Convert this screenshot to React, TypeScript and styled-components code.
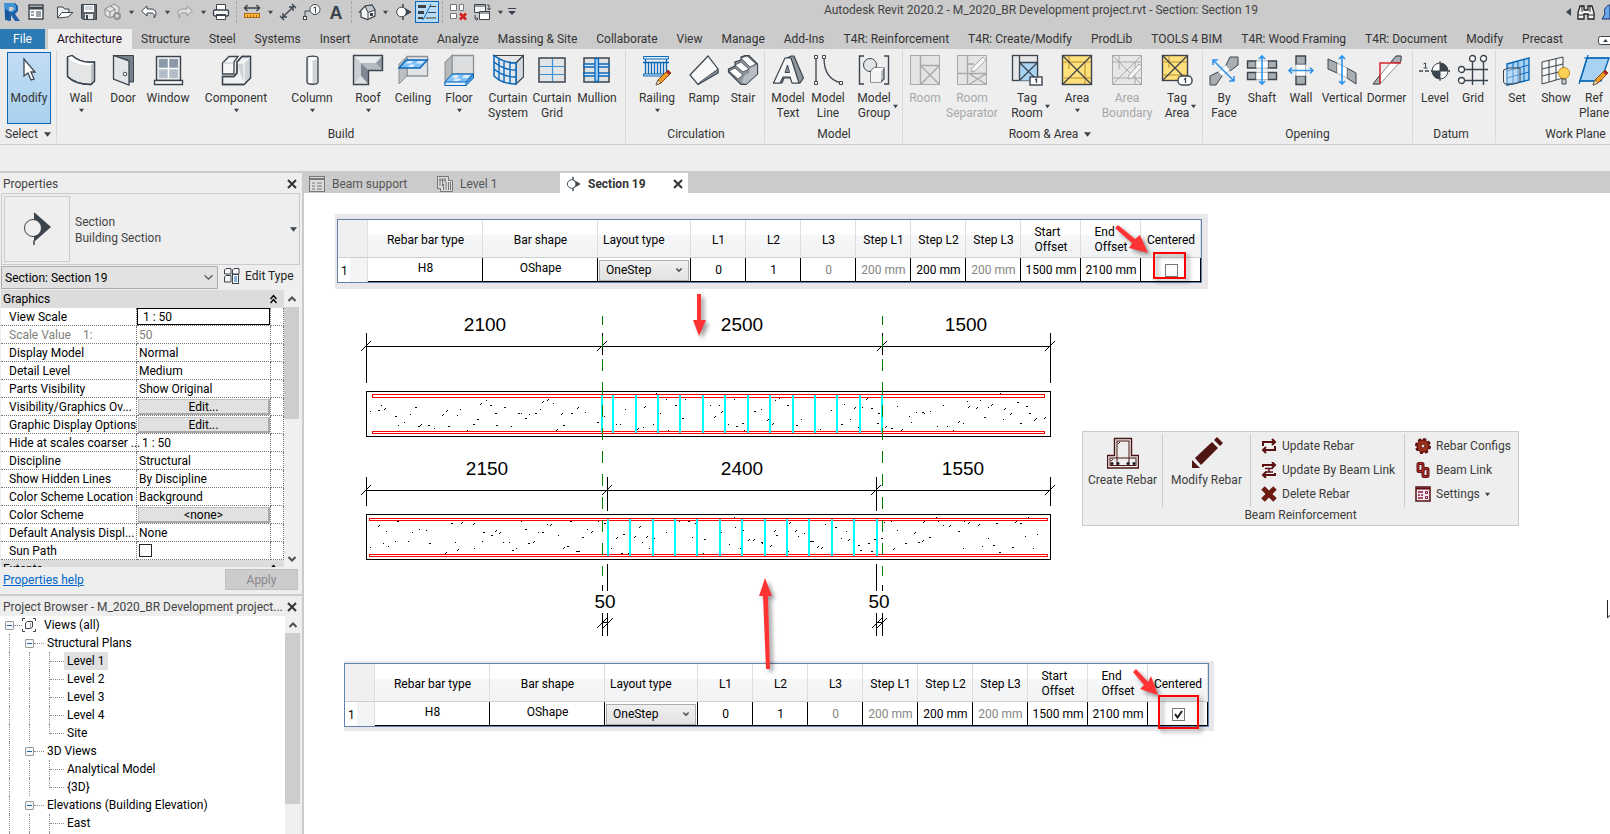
import React from "react";
import styled, { createGlobalStyle, css } from "styled-components";

const GlobalStyle = createGlobalStyle`
  *, *::before, *::after { box-sizing: border-box; }
  html, body, #root { height: 100%; }
  body {
    margin: 0;
    overflow: hidden;
    background: #eeeeee;
    color: #333333;
    font: 12px/16px Roboto, "Liberation Sans", sans-serif;
  }
  button, select, input { font: inherit; color: inherit; }
  svg { display: block; flex: none; }
`;

const ButtonBase = styled.button`
  margin: 0;
  padding: 0;
  border: 0;
  background: none;
`;

const Shell = styled.div`
  display: flex;
  flex-direction: column;
  height: 100vh;
`;

/* ---------- title bar ---------- */

const TitleBar = styled.header`
  display: flex;
  align-items: flex-start;
  height: 29px;
  background: #cbcbcb;
`;

const QuickBar = styled.div`
  display: flex;
  align-items: center;
  height: 24px;
`;

const QuickButton = styled(ButtonBase)<{ $active?: boolean; $spaced?: boolean }>`
  display: flex;
  align-items: center;
  justify-content: center;
  width: 24px;
  height: 22px;
  margin-left: ${(p) => (p.$spaced ? 5 : 0)}px;
  ${(p) => p.$active && css`background: #b9dbf6; border: 1px solid #0a67b8;`}
`;

const QuickDrop = styled(ButtonBase)`
  display: flex;
  align-items: center;
  justify-content: center;
  width: 12px;
  height: 22px;
`;

const QuickSplit = styled.span`
  width: 1px;
  height: 22px;
  margin: 0 3px;
  border-left: 1px dashed #a6a6a6;
`;

const WindowTitle = styled.h1`
  flex: 1;
  margin: 0;
  font-size: 12px;
  font-weight: 400;
  line-height: 20px;
  text-align: center;
  white-space: nowrap;
  color: #444444;
`;

const SearchBar = styled.div`
  display: flex;
  align-items: center;
  justify-content: flex-end;
  width: 46px;
  height: 24px;
  gap: 6px;
  overflow: hidden;
`;

/* ---------- ribbon ---------- */

const TabStrip = styled.nav`
  display: flex;
  height: 20px;
  overflow: hidden;
  background: #cbcbcb;
`;

const FileTab = styled(ButtonBase)`
  flex: none;
  width: 45px;
  margin-right: 3px;
  background: #2c7ab4;
  color: #ffffff;
`;

const RibbonTab = styled(ButtonBase)<{ $active?: boolean }>`
  flex: none;
  padding: 0 10px 0 9px;
  white-space: nowrap;
  background: ${(p) => (p.$active ? "#eeeeee" : "transparent")};
  color: ${(p) => (p.$active ? "#1c0a1c" : "#333333")};
`;

const RibbonToggle = styled(ButtonBase)`
  flex: none;
  margin-left: auto;
  padding-top: 3px;
  width: 12px;
  overflow: hidden;
`;

const Ribbon = styled.section`
  display: flex;
  flex: none;
  height: 96px;
  overflow: hidden;
  background: #eeeeee;
  border-bottom: 1px solid #cbcbcb;
`;

const Panel = styled.section<{ $pad?: number; $padEnd?: number; $min?: number }>`
  display: flex;
  flex: none;
  flex-direction: column;
  min-width: ${(p) => p.$min ?? 0}px;
  margin: 1px 0;
  padding: 0 ${(p) => p.$padEnd ?? 0}px 0 ${(p) => p.$pad ?? 0}px;
  border-right: 1px solid #d9d9d9;
`;

const PanelTools = styled.div`
  display: flex;
  height: 76px;
`;

const PanelTitle = styled.h2`
  display: flex;
  align-items: center;
  justify-content: center;
  gap: 6px;
  margin: 0;
  font-size: 12px;
  font-weight: 400;
  line-height: 16px;
`;

const ToolButton = styled(ButtonBase)<{ $w: number }>`
  display: flex;
  flex: none;
  flex-direction: column;
  align-items: center;
  width: ${(p) => p.$w}px;
  padding-top: 4px;
  color: #333333;
  &:disabled { color: #a8a8a8; }
  &:disabled svg { opacity: 0.4; filter: grayscale(1); }
`;

const ToolLabel = styled.span`
  display: flex;
  align-items: center;
  margin-top: 5px;
  line-height: 15px;
  white-space: pre;
`;

const LabelPad = styled.span`
  flex: none;
  width: 8px;
  padding-left: 2px;
`;

const ToolDrop = styled.span`
  display: flex;
  height: 8px;
  align-items: center;
`;

const ModifyButton = styled(ButtonBase)`
  display: flex;
  flex-direction: column;
  align-items: center;
  width: 44px;
  height: 72px;
  margin: 2px 5px 2px 7px;
  padding-top: 1px;
  border: 1px solid #0a67b8;
  background: linear-gradient(#c2dcf4, #a9d2ee);
`;

const OptionsBar = styled.div`
  flex: none;
  height: 26px;
`;

/* ---------- work area ---------- */

const Workspace = styled.main`
  display: flex;
  flex: 1;
  min-height: 0;
  border-top: 2px solid #cbcbcb;
`;

const SideBar = styled.aside`
  display: flex;
  flex: none;
  flex-direction: column;
  width: 304px;
  border-right: 2px solid #cbcbcb;
`;

const PaletteHead = styled.header`
  display: flex;
  flex: none;
  align-items: center;
  justify-content: space-between;
  height: 20px;
  padding: 2px 5px 0 3px;
  white-space: nowrap;
  color: #444444;
`;

const PaletteTitle = styled.h2`
  margin: 0;
  font-size: 12px;
  font-weight: 400;
`;

const TypeBox = styled.div`
  display: flex;
  flex: none;
  align-items: center;
  height: 72px;
  margin: 0 2px 0 1px;
  padding: 0 2px;
  border: 1px solid #cbcbcb;
  color: #444444;
`;

const TypeThumb = styled.div`
  display: flex;
  align-items: center;
  justify-content: center;
  width: 66px;
  height: 66px;
  border: 1px solid #cbcbcb;
`;

const TypeNames = styled.p`
  flex: 1;
  margin: 0;
  padding: 2px 0 0 5px;
`;

const InstanceRow = styled.div`
  display: flex;
  flex: none;
  align-items: center;
  height: 25px;
  padding: 0 2px 0 1px;
  gap: 6px;
`;

const SelectWrap = styled.label<{ $w: number; $h: number }>`
  display: grid;
  grid-template-columns: 1fr 18px;
  align-items: center;
  justify-items: center;
  width: ${(p) => p.$w}px;
  height: ${(p) => p.$h}px;
  border: 1px solid #adadad;
  background: #e1e1e1;
  color: #000000;
  select {
    grid-area: 1 / 1 / 2 / 3;
    width: 100%;
    height: 100%;
    padding: 0 3px;
    border: 0;
    background: none;
    appearance: none;
  }
  svg { grid-area: 1 / 2; pointer-events: none; }
`;

const EditType = styled(ButtonBase)`
  display: flex;
  align-items: center;
  gap: 5px;
  padding-bottom: 3px;
  color: #222222;
`;

const PropScroll = styled.div`
  display: flex;
  flex: none;
  height: 277px;
  padding: 0 2px 0 1px;
  overflow: hidden;
`;

const PropTable = styled.table`
  flex: none;
  width: 283px;
  height: min-content;
  table-layout: fixed;
  border-collapse: separate;
  border-spacing: 0;
  background: #ffffff;
  color: #000000;
`;

const GroupCell = styled.th`
  height: 18px;
  padding: 0 7px 0 2px;
  background: #dcdcdc;
  font-weight: 400;
  text-align: left;
  div { display: flex; align-items: center; justify-content: space-between; }
`;

const PropName = styled.th<{ $dim?: boolean }>`
  height: 18px;
  padding: 0 0 0 8px;
  border: 1px dotted #777777;
  border-width: 0 1px 1px 0;
  font-weight: 400;
  line-height: 16px;
  text-align: left;
  white-space: pre;
  color: ${(p) => (p.$dim ? "#80807a" : "#000000")};
`;

const PropValue = styled.td<{ $dim?: boolean; $flush?: boolean }>`
  padding: 0 0 0 ${(p) => (p.$flush ? 0 : 2)}px;
  border: 1px dotted #777777;
  border-width: 0 1px 1px 0;
  line-height: 16px;
  white-space: pre;
  color: ${(p) => (p.$dim ? "#80807a" : "#000000")};
`;

const ScaleInput = styled.input`
  display: block;
  width: 133px;
  height: 17px;
  padding: 0 5px;
  border: 1px solid #000000;
`;

const CellButton = styled(ButtonBase)`
  display: block;
  width: 132px;
  height: 16px;
  margin-left: 1px;
  border: 1px solid #c2c2c2;
  border-right: 2px solid #a8a8a8;
  border-bottom: 2px solid #a8a8a8;
  background: #e1e1e1;
  line-height: 14px;
`;

const Tick = styled.input<{ $edge?: string }>`
  display: block;
  width: 13px;
  height: 13px;
  margin: 0;
  border: 1px solid ${(p) => p.$edge ?? "#222222"};
  background: #ffffff;
  appearance: none;
`;

const TickBox = styled.label`
  display: inline-grid;
  place-items: center;
  vertical-align: middle;
  & > * { grid-area: 1 / 1; }
  svg { pointer-events: none; }
`;

const ScrollBar = styled.div`
  display: flex;
  flex: none;
  flex-direction: column;
  align-items: center;
  width: 15px;
  background: #f0f0f0;
`;

const ScrollArrow = styled(ButtonBase)`
  display: flex;
  align-items: center;
  justify-content: center;
  flex: none;
  width: 15px;
  height: 17px;
`;

const ScrollThumb = styled.div<{ $h: number }>`
  flex: none;
  width: 15px;
  height: ${(p) => p.$h}px;
  margin-bottom: auto;
  background: #cdcdcd;
`;

const PaletteFoot = styled.footer`
  display: flex;
  flex: none;
  align-items: center;
  justify-content: space-between;
  height: 27px;
  padding: 0 4px 2px 3px;
  a { color: #0066cc; }
`;

const ApplyButton = styled(ButtonBase)`
  width: 73px;
  height: 21px;
  border: 1px solid #bfbfbf;
  background: #cccccc;
  &:disabled { color: #8a868a; }
`;

const BrowserPalette = styled.section`
  display: flex;
  flex: 1;
  flex-direction: column;
  min-height: 0;
  border-top: 2px solid #cbcbcb;
`;

const BrowserBody = styled.div`
  display: flex;
  flex: 1;
  min-height: 0;
  margin-right: 2px;
  overflow: hidden;
  background: #ffffff;
`;

const Tree = styled.ul`
  flex: 1;
  margin: 0;
  padding: 0;
  list-style: none;
  color: #000000;
`;

const TreeRow = styled.li`
  display: flex;
  align-items: center;
  height: 18px;
  white-space: nowrap;
`;

const Guide = styled.span<{ $kind: "pass" | "leaf" | "end" }>`
  flex: none;
  align-self: ${(p) => (p.$kind === "end" ? "flex-start" : "stretch")};
  height: ${(p) => (p.$kind === "end" ? "10px" : "auto")};
  width: ${(p) => (p.$kind === "pass" ? 11 : 0)}px;
  margin-left: 9px;
  border-left: 1px dotted #8c8c8c;
`;

const Twig = styled.span<{ $w: number }>`
  flex: none;
  width: ${(p) => p.$w}px;
  height: 1px;
  border-top: 1px dotted #8c8c8c;
`;

const Fold = styled(ButtonBase)`
  display: grid;
  place-items: center;
  flex: none;
  width: 9px;
  height: 9px;
  margin-left: 5px;
  border: 1px solid #9a9a9a;
  border-radius: 1px;
  background: #f4f7fa;
  &::before { content: ""; width: 5px; height: 1px; background: #2563a8; }
`;

const TreeText = styled.span<{ $on?: boolean; $root?: boolean }>`
  padding: 1px 3px 1px ${(p) => (p.$root ? 8 : 3)}px;
  background: ${(p) => (p.$on ? "#e0e0e0" : "transparent")};
`;

/* ---------- documents ---------- */

const DocArea = styled.section`
  display: flex;
  flex: 1;
  flex-direction: column;
  min-width: 0;
  background: #ffffff;
`;

const DocTabs = styled.nav`
  display: flex;
  flex: none;
  height: 20px;
  background: #cbcbcb;
`;

const DocTab = styled.div<{ $active?: boolean }>`
  display: flex;
  align-items: center;
  width: 128px;
  padding: 2px 5px 0;
  gap: 7px;
  background: ${(p) => (p.$active ? "#ffffff" : "transparent")};
  color: ${(p) => (p.$active ? "#333333" : "#555555")};
  font-weight: ${(p) => (p.$active ? 700 : 400)};
`;

const DocName = styled(ButtonBase)`
  flex: 1;
  text-align: left;
  white-space: nowrap;
`;

const Canvas = styled.div`
  position: relative;
  flex: 1;
  min-height: 0;
  overflow: hidden;
`;

const GridFrame = styled.section<{ $first?: boolean }>`
  width: max-content;
  margin: ${(p) => (p.$first ? "21px 0 0 31px" : "0 0 0 40px")};
  padding: ${(p) => (p.$first ? "5px 6px 6px 2px" : "2px 5px 4px 0")};
  background: #e9e7e9;
`;

const RebarTable = styled.table`
  width: 865px;
  height: 64px;
  table-layout: fixed;
  border-collapse: separate;
  border-spacing: 0;
  border: 1px solid #5f83ad;
  background: #ffffff;
  color: #000000;
`;

const HeadCell = styled.th<{ $left?: boolean; $corner?: boolean }>`
  height: 38px;
  padding: 3px 0 0 ${(p) => (p.$left ? 5 : 1)}px;
  border-right: 1px solid #dedede;
  border-bottom: 1px solid #cfcfcf;
  background: ${(p) => (p.$corner ? "#f0f0f0" : "linear-gradient(#ffffff 40%, #f6f7f8 41%, #f1f2f4)")};
  font-weight: 400;
  line-height: 15px;
  text-align: ${(p) => (p.$left ? "left" : "center")};
  white-space: nowrap;
  span { display: inline-block; text-align: left; white-space: pre; }
`;

const RowHead = styled.th`
  padding: 2px 0 0 3px;
  background: linear-gradient(90deg, #ffffff 40%, #f3f4f6 41%);
  border-right: 1px solid #dedede;
  font-weight: 400;
  text-align: left;
`;

const DataCell = styled.td<{ $dim?: boolean; $high?: boolean }>`
  height: 24px;
  padding: ${(p) => (p.$high ? "0 0 3px 1px" : "1px 0 0 1px")};
  border-right: 1px solid #000000;
  border-bottom: 1px solid #000000;
  text-align: center;
  white-space: nowrap;
  line-height: 15px;
  color: ${(p) => (p.$dim ? "#85857f" : "#000000")};
`;

const LayoutSelect = styled(SelectWrap)`
  background: linear-gradient(#f0f0f0, #e2e2e2);
  select { padding: 1px 0 0 6px; }
`;

const DrawingRow = styled.div`
  display: flex;
  align-items: flex-start;
  padding-left: 40px;
  gap: 14px;
`;

const Markup = styled.svg`
  position: absolute;
  inset: 0;
  pointer-events: none;
`;

const MarkupShadow = styled.g`
  filter: drop-shadow(3px 3px 2px rgba(0, 0, 0, 0.4));
`;

const ReinforcePanel = styled.section`
  flex: none;
  width: 437px;
  height: 95px;
  margin-top: 142px;
  border: 1px solid #cbcbcb;
  background: #eeeeee;
  color: #3c3c3c;
`;

const ReinforceTools = styled.div`
  display: flex;
  height: 73px;
  margin-top: 2px;
`;

const BigTool = styled(ButtonBase)<{ $w: number }>`
  display: flex;
  flex-direction: column;
  align-items: center;
  gap: 3px;
  width: ${(p) => p.$w}px;
  padding-top: 3px;
  border-right: 1px solid #cbcbcb;
  white-space: nowrap;
`;

const SmallTools = styled.div<{ $w?: number }>`
  display: flex;
  flex-direction: column;
  width: ${(p) => (p.$w ? `${p.$w}px` : "auto")};
  padding-left: 10px;
  border-right: ${(p) => (p.$w ? "1px solid #cbcbcb" : "0")};
`;

const SmallTool = styled(ButtonBase)`
  display: flex;
  align-items: center;
  gap: 5px;
  height: 24px;
  white-space: nowrap;
`;

/* ---------- icons ---------- */

const INK = "#3b444d";
const BLUE = "#0a67b8";

const Caret = ({ size = 5 }: { size?: number }) => (
  <svg width={size} height={size} viewBox="0 0 6 6"><path d="M0 1H6L3 5Z" fill={INK} /></svg>
);

const Cross = () => (
  <svg width="10" height="10" viewBox="0 0 10 10"><path d="M1 1L9 9M9 1L1 9" stroke="#333333" strokeWidth="2" /></svg>
);

const Chevron = ({ up, size = 8 }: { up?: boolean; size?: number }) => (
  <svg width={size} height={size} viewBox="0 0 8 8" fill="none" stroke="#505050" strokeWidth={size > 8 ? 1 : 2}>
    <path d={up ? "M0.5 6L4 2.5L7.5 6" : "M0.5 2L4 5.5L7.5 2"} />
  </svg>
);

const quick: Record<string, React.ReactNode> = {
  logo: (
    <>
      <path d="M2 0H12L15 3V8L12 11L17 18H12L8 12V18L2 17Z" fill="#1d5fa8" />
      <path d="M1 0H11L13 3V7L10 9H6V17L2 15Z" fill="#3f92d6" />
      <path d="M6 4H10L11 6L9 8H6Z" fill="#cbcbcb" />
      <path d="M2 6L6 8V18L2 15Z" fill="#1a5799" />
    </>
  ),
  list: (
    <>
      <rect x="2" y="2" width="14" height="14" fill="#fff" stroke={INK} strokeWidth="1.4" />
      <path d="M2 5H16" stroke={INK} strokeWidth="3" />
      <path d="M4 9H7M4 12H7M9 9H14M9 11H14M9 13H14" stroke={INK} />
    </>
  ),
  open: (
    <>
      <path d="M1.500 15V4H7L8.500 6H13V9" fill="#eee" stroke={INK} />
      <path d="M1.500 15L6 9.500H17L12 14Z" fill="#fff" stroke={INK} />
    </>
  ),
  save: (
    <>
      <path d="M1.500 1.500H16.500V16.500H3L1.500 15Z" fill="#5d656d" stroke={INK} />
      <rect x="4" y="2" width="10" height="7" fill="#fff" />
      <rect x="5" y="11" width="8" height="5" fill="#e8e8e8" />
      <rect x="6" y="12" width="2" height="4" fill={INK} />
      <path d="M5 4H13M5 6H13" stroke="#a8b0b8" />
    </>
  ),
  sync: (
    <g fill="#e2e2e2" stroke="#8a8a8a">
      <path d="M5 4L10 1L15 4V9L10 12L5 9Z" />
      <path d="M1 6L6 3L11 6V12L6 15L1 12Z" />
      <path d="M1 6L6 9L11 6M6 9V15" fill="none" />
      <circle cx="13" cy="13" r="3.500" fill="#9a9a9a" />
      <path d="M11 13H15M13 11V15" stroke="#eee" />
    </g>
  ),
  undo: <path d="M7 3L1.500 8L7 13V10H11C14 10 15 12 14 15C17 12 17 6 11 6H7Z" fill="#fff" stroke={INK} />,
  redo: <path d="M11 3L16.500 8L11 13V10H7C4 10 3 12 4 15C1 12 1 6 7 6H11Z" fill="#ddd" stroke="#9b9b9b" />,
  print: (
    <>
      <path d="M4.500 7V1.500H13.500V7" fill="#fff" stroke={INK} />
      <rect x="1.500" y="7" width="15" height="6" rx="1.500" fill="#f4f4f4" stroke={INK} strokeWidth="1.400" />
      <path d="M4.500 12H13.500V16.500H4.500Z" fill="#fff" stroke={INK} />
      <path d="M4 12H14" stroke={INK} strokeWidth="2" />
    </>
  ),
  measure: (
    <>
      <path d="M2 5H16M4.500 2L1.500 5L4.500 8M13.500 2L16.500 5L13.500 8" stroke={INK} strokeWidth="1.500" fill="none" />
      <rect x="1.500" y="10.500" width="15" height="4" fill="#ffb83f" stroke="#b06a12" />
      <path d="M4.500 12V14M7.500 12V14M10.500 12V14M13.500 12V14" stroke="#b06a12" />
    </>
  ),
  dim: <path d="M3 15L15 3M4 10V14H8M10 4H14V8M1 13L5 17M13 1L17 5" stroke={INK} strokeWidth="1.300" fill="none" />,
  tag: (
    <>
      <circle cx="12" cy="6.500" r="5" fill="#fff" stroke={INK} />
      <path d="M10.500 5L12.500 4V10M7 8H2V14" stroke={INK} fill="none" />
      <rect x="0.500" y="13.500" width="3" height="3" fill="#fff" stroke={INK} />
    </>
  ),
  house: (
    <>
      <path d="M1.500 9L7 3L14 2L17 7V13L9.500 16.500L3 14V9Z" fill="#f4f4f4" stroke={INK} strokeWidth="1.200" />
      <path d="M7 3L14 2L17 7L10 9.500Z" fill="#c3c8cd" stroke={INK} />
      <path d="M10 9.500V16" stroke={INK} />
      <rect x="12" y="10" width="3" height="3" fill={INK} />
    </>
  ),
  section: (
    <>
      <path d="M9 1V17V13.500L17 9L9 4.500Z" fill={INK} stroke={INK} />
      <circle cx="7.500" cy="9" r="4.800" fill="#fff" stroke={INK} />
    </>
  ),
  thin: (
    <>
      <path d="M0 3.500H8M0 9.500H6" stroke={INK} strokeWidth="3" />
      <path d="M0 15H5" stroke={INK} strokeWidth="2" />
      <path d="M12 3.500H18M10 9.500H18M8 15H18" stroke={INK} />
      <path d="M13 1L5 17" stroke={BLUE} />
    </>
  ),
  closeViews: (
    <>
      <g fill="#fff" stroke="#777"><path d="M1.500 1.500H7.500V7.500H1.500ZM10.500 1.500H14.500V7.500H10.500ZM1.500 10.500H7.500V15.500H1.500Z" /></g>
      <path d="M11 10.500L17 16.500M17 10.500L11 16.500" stroke="#d81e1e" strokeWidth="2.500" />
    </>
  ),
  switchViews: (
    <>
      <path d="M1.500 1.500H12.500V9.500H1.500ZM1 3H13" fill="#f4f4f4" stroke={INK} />
      <path d="M6.500 8.500H16.500V16.500H6.500ZM6 10H17" fill="#fff" stroke={INK} />
      <path d="M14 2H16V6M14.500 5L16 7L17.500 5M2 12V16H5M3.500 14.500L5 16L3.500 17.500" fill="none" stroke={INK} />
    </>
  ),
  binoculars: (
    <>
      <path d="M3 3H7V7H11V3H15L17 10V16H11V11H7V16H1V10Z" fill="#f4f4f4" stroke="#222" strokeWidth="1.300" />
      <path d="M1 12H7M11 12H17M5 3V9M13 3V9" stroke="#222" />
    </>
  ),
};

const QuickIcon = ({ name, size = 18 }: { name: string; size?: number }) => (
  <svg width={size} height={size} viewBox="0 0 18 18" fill="none">
    {name === "letter" ? (
      <text x="9" y="16" fontFamily="Liberation Sans, sans-serif" fontWeight="700" fontSize="18" textAnchor="middle" fill={INK}>A</text>
    ) : quick[name]}
  </svg>
);

const Pencil = () => (
  <g>
    <path d="M15 31L17 26L27 16L30 19L20 29Z" fill="#f29b27" stroke="#8a4a10" />
    <path d="M27 16L30 19L28 21L25 18Z" fill="#a4282b" />
    <path d="M15 31L17 26L20 29Z" fill="#f9dfae" stroke={INK} strokeWidth="0.600" />
  </g>
);

const tool: Record<string, React.ReactNode> = {
  wall: (
    <>
      <path d="M2.500 3L7 1.500C13 7 20 9 29.500 8V27L26 30.500C16 30.500 8 28 2.500 22.500Z" fill="#e3e5e7" stroke={INK} strokeWidth="1.300" />
      <path d="M2.500 3L7 1.500C13 7 20 9 29.500 8L26 11C17 12 8 9 2.500 3Z" fill="#fff" />
      <path d="M26 11V30L29.500 27V8Z" fill="#bcc1c6" />
      <path d="M2.500 3L7 1.500C13 7 20 9 29.500 8V27L26 30.500C16 30.500 8 28 2.500 22.500Z" fill="none" stroke={INK} strokeWidth="1.300" />
    </>
  ),
  door: (
    <>
      <path d="M6.500 1.500H26.500V28H21V6Z" fill="#77808a" stroke={INK} />
      <path d="M6.500 1.500L22 7V31L6.500 25Z" fill="#e2e5e7" stroke={INK} strokeWidth="1.300" />
      <circle cx="18" cy="20" r="1.800" fill="#fff" stroke={INK} />
    </>
  ),
  window: (
    <>
      <rect x="4.500" y="2.500" width="24" height="24" fill="#e8eaec" stroke={INK} strokeWidth="1.400" />
      <rect x="7" y="5" width="19" height="19" fill="#8b99a8" />
      <rect x="7" y="15" width="19" height="9" fill="#b4bec8" />
      <path d="M16.500 5V24M7 14.500H26" stroke="#fff" strokeWidth="1.500" />
      <path d="M2.500 26.500H30.500V30.500H2.500Z" fill="#fff" stroke={INK} strokeWidth="1.400" />
    </>
  ),
  component: (
    <>
      <path d="M2.500 9L9 2.500H18L14 8V20H2.500Z" fill="#f6f6f6" stroke={INK} strokeWidth="1.300" />
      <path d="M2.500 22.500H14L17 19V8L22 2.500H30.500V24L24 30.500H2.500Z" fill="#f0f1f2" stroke={INK} strokeWidth="1.300" />
      <path d="M17 9H23.500L30 3V24L24 30Z" fill="#cfd3d6" />
      <path d="M17 9H24V30M24 9L30 3" fill="none" stroke="#fff" />
      <path d="M2.500 22.500H14L17 19V8L22 2.500H30.500V24L24 30.500H2.500Z" fill="none" stroke={INK} strokeWidth="1.300" />
      <path d="M3 9H13" stroke="#c0c5ca" />
    </>
  ),
  column: (
    <>
      <path d="M11 4C11 1.500 22 1.500 22 4V28C22 31 11 31 11 28Z" fill="#cfd3d6" stroke={INK} strokeWidth="1.300" />
      <path d="M14.500 6V29" stroke="#fff" strokeWidth="4" />
      <ellipse cx="16.500" cy="4.500" rx="4.500" ry="1.500" fill="#fff" />
    </>
  ),
  roof: (
    <>
      <path d="M1.500 1.500H30.500V16.500H16.500V30.500H1.500Z" fill="#e9ebec" />
      <path d="M1.500 1.500L9 9V22L1.500 30.500Z" fill="#c9ced3" />
      <path d="M9 9H24L30.500 16.500H16.500V30.500L9 22Z" fill="#b5bbc2" />
      <path d="M9 9L16.500 16.500V30.500L9 22Z" fill="#7f8a95" />
      <path d="M1.500 30.500L9 22L16.500 30.500Z" fill="#dfe2e5" />
      <path d="M30.500 1.500L24 9L30.500 16.500Z" fill="#8f99a3" />
      <path d="M1.500 1.500H30.500V16.500H16.500V30.500H1.500Z" fill="none" stroke={INK} strokeWidth="1.400" />
    </>
  ),
  ceiling: (
    <>
      <path d="M10 2.500H30.500V22H10Z" fill="#e3e4e5" stroke="#8b9298" strokeWidth="1.300" />
      <path d="M2 10L10 2.500V22L2 30Z" fill="#bdbfc1" stroke="#8b9298" />
      <path d="M2 14L9 6H30.500L23 14Z" fill="#7fc0f7" stroke={BLUE} strokeWidth="1.300" />
      <path d="M11 7H16L14 9.500H9ZM21 7H27L25 9.500H19ZM13 10.500H18L16 13H11Z" fill="#dceefd" />
    </>
  ),
  floor: (
    <>
      <path d="M9 1.500H30.500V20H9Z" fill="#dcdedf" stroke="#8b9298" strokeWidth="1.300" />
      <path d="M2 8L9 1.500V20L2 28Z" fill="#b6b8ba" stroke="#8b9298" />
      <path d="M2 28L9 20H30.500L23 28V31.500H2Z" fill="#7fc0f7" stroke={BLUE} />
      <path d="M2 28H23V31.500H2Z" fill="#e2f1fd" stroke={BLUE} />
      <path d="M23 28L30.500 20V24L23 31.500" fill="#4a9be0" stroke={BLUE} />
      <path d="M11 21H16L14 24H9ZM21 21H27L25 24H19ZM12 24.500H18L16 27H10Z" fill="#dceefd" />
    </>
  ),
  curtainSystem: (
    <>
      <path d="M2 1.500H31.500L24 9C15 9 8 6 2 1.500Z" fill="#e4e6e8" stroke={INK} strokeWidth="1.200" />
      <path d="M24 9L31.500 1.500V23L24 30Z" fill="#d6dadd" stroke={INK} strokeWidth="1.200" />
      <path d="M2 1.500C8 6 15 9 24 9V30C15 30 8 28 2 22Z" fill="#dfe7ee" stroke={BLUE} strokeWidth="1.500" />
      <path d="M2 8C8 13 15 16 24 16M2 15C8 20 15 23 24 23M7 5V26.500M12 8V29M18 9V30" stroke={BLUE} strokeWidth="1.400" />
    </>
  ),
  curtainGrid: (
    <>
      <rect x="3" y="4" width="26" height="24" fill="#e3e5e6" stroke={INK} strokeWidth="1.500" />
      <path d="M4 12.500H28M4 20.500H28M16.500 5V27" stroke="#3a8fd9" strokeWidth="1.200" />
    </>
  ),
  mullion: (
    <>
      <rect x="3" y="4" width="25" height="24" fill="#dfe1e3" stroke={INK} strokeWidth="1.500" />
      <path d="M3 10H28V13H3ZM3 19H28V22H3Z" fill="#d8ebfa" stroke={BLUE} strokeWidth="1.300" />
      <path d="M14 4.500H17.500V27.500H14Z" fill="#9fd0f6" stroke={BLUE} strokeWidth="1.300" />
    </>
  ),
  railing: (
    <>
      <path d="M2.500 2.500H27.500V5H2.500ZM2.500 20H27.500V22H2.500Z" fill="#e4f1fc" stroke={BLUE} />
      <path d="M4.500 5V20M7.500 9V20M10.500 9V20M13.500 9V20M16.500 9V20M19.500 9V20M22.500 9V20M25.500 5V20M2 8.500H28" stroke={BLUE} strokeWidth="1.300" />
      <Pencil />
    </>
  ),
  ramp: (
    <>
      <path d="M2 21L20 2L30 15V19L10 30.500Z" fill="#f8f8f8" stroke={INK} strokeWidth="1.200" />
      <path d="M30 15V19L10 30.500L12 28Z" fill="#7d8791" stroke={INK} strokeWidth="0.800" />
    </>
  ),
  stair: (
    <>
      <path d="M1.500 15L8 12V8L14 6V3L18 1.500H22L30.500 10V20L19 30.500H14L1.500 18Z" fill="#8d959d" stroke={INK} strokeWidth="1.200" />
      <path d="M14 4L20 2L29 10L23 13ZM8 11L14 8L22 15L16 18ZM2 17L8 14L16 21L11 25Z" fill="#fff" stroke={INK} strokeWidth="0.800" />
      <path d="M23 14L30 11V20L19 30L15 28L17 22L22 19Z" fill="#b8bec4" />
    </>
  ),
  modelText: (
    <>
      <path d="M15 4L19 2H22L31.500 24L28 29H21L20 24H12L10 29H2Z" fill="#8d959d" stroke={INK} strokeWidth="1.200" />
      <path d="M1.500 29L13 4H19L27 29H20L18 23H11L8 29Z" fill="#f6f6f6" stroke={INK} strokeWidth="1.200" />
      <path d="M13 18.500L15.500 11L17.500 18.500Z" fill="#8d959d" stroke={INK} />
    </>
  ),
  modelLine: (
    <>
      <path d="M4 3V29M12 4C12 18 17 26 29 29" stroke={INK} strokeWidth="1.300" fill="none" />
      <path d="M2.500 1.500H5.500V4.500H2.500ZM2.500 27.500H5.500V30.500H2.500ZM10.500 1.500H13.500V4.500H10.500ZM27.500 27.500H30.500V30.500H27.500Z" fill="#fff" stroke={INK} />
    </>
  ),
  modelGroup: (
    <>
      <path d="M6 2H1.500V30H6M26 2H30.500V30H26" stroke={INK} strokeWidth="1.400" />
      <circle cx="12" cy="11" r="6.500" fill="#e1e3e5" stroke={INK} />
      <path d="M13 17L16 14H26V25L23 28H13Z" fill="#b9bec3" stroke={INK} strokeWidth="1.200" />
      <path d="M13 17H23V28H13Z" fill="#f4f4f4" />
      <path d="M13 17L16 14H26L23 17Z" fill="#fff" />
    </>
  ),
  room: (
    <>
      <rect x="1.500" y="1.500" width="29" height="29" fill="#d4d4d4" stroke={INK} />
      <path d="M11.500 1.500V30.500M11.500 11.500H30.500M11.500 11.500L30.500 30.500M30.500 11.500L11.500 30.500" stroke={INK} strokeWidth="1.400" />
    </>
  ),
  roomSep: (
    <>
      <rect x="1.500" y="1.500" width="29" height="29" fill="#d4d4d4" stroke={INK} />
      <path d="M11.500 1.500V30.500M1.500 19.500H30.500M13 19.500L30.500 30.500M30.500 19.500L13 30.500M11.500 10H18" stroke={INK} strokeWidth="1.400" />
      <path d="M15 18L16 14L27 3L30 6L19 17Z" fill="#fff" stroke={INK} />
    </>
  ),
  tagRoom: (
    <>
      <rect x="1.500" y="1.500" width="25" height="25" fill="#e6e7e8" stroke={INK} strokeWidth="1.300" />
      <path d="M8.500 8.500H26.500V26.500H8.500Z" fill="#a9d3f2" />
      <path d="M8.500 1.500V26.500M8.500 8.500H26.500V26.500M8.500 8.500L26.500 26.500M26.500 8.500L8.500 26.500" stroke={INK} strokeWidth="1.300" />
      <rect x="19" y="23" width="12" height="8" fill="#fff" stroke={INK} strokeWidth="1.400" />
      <path d="M24 26L25.500 25V29" stroke={INK} strokeWidth="1.300" fill="none" />
    </>
  ),
  area: (
    <>
      <rect x="1.500" y="1.500" width="29" height="29" fill="#ffe07a" stroke={INK} strokeWidth="1.400" />
      <path d="M1.500 8H30M8 1.500V15M1.500 24H30M24 8V30" stroke="#b98a2c" />
      <path d="M1.500 1.500L30.500 30.500M30.500 1.500L1.500 30.500" stroke={INK} strokeWidth="1.300" />
    </>
  ),
  areaBoundary: (
    <>
      <rect x="1.500" y="1.500" width="29" height="29" fill="#dcdcdc" stroke={INK} />
      <path d="M1.500 8H30M8 1.500V15M1.500 24H30M24 8V30M1.500 1.500L30.500 30.500M30.500 1.500L1.500 30.500" stroke={INK} />
      <path d="M17 25L18 21L28 10L31 13L21 24Z" fill="#fff" stroke={INK} />
    </>
  ),
  tagArea: (
    <>
      <rect x="1.500" y="1.500" width="25" height="25" fill="#ffe07a" stroke={INK} strokeWidth="1.400" />
      <path d="M1.500 8H26M8 1.500V14M1.500 21H26" stroke="#b98a2c" />
      <path d="M1.500 1.500L26.500 26.500M26.500 1.500L1.500 26.500" stroke={INK} strokeWidth="1.300" />
      <rect x="17" y="22" width="14" height="9" rx="4" fill="#fff" stroke={INK} strokeWidth="1.400" />
      <path d="M23 25.500L24.500 24.500V29" stroke={INK} strokeWidth="1.300" fill="none" />
    </>
  ),
  byFace: (
    <>
      <path d="M2 22L10 18L14 22L8 31H2Z" fill="#a9aeb3" stroke={INK} />
      <path d="M18 11L22 3H30V11L22 17Z" fill="#a9aeb3" stroke={INK} />
      <path d="M10 18L18 11L22 16L14 22Z" fill="#fff" stroke="#9aa" strokeWidth="0.600" />
      <path d="M5 6L26 27M5 11V6H10M26 22V27H21" stroke="#2f93e8" strokeWidth="1.600" fill="none" />
    </>
  ),
  shaft: (
    <>
      <path d="M1.500 7H10V14H1.500ZM22 7H30.500V14H22ZM1.500 18.500H10V25.500H1.500ZM22 18.500H30.500V25.500H22Z" fill="#a9aeb3" stroke={INK} strokeWidth="1.400" />
      <path d="M10 7H22V14H10ZM10 18.500H22V25.500H10Z" fill="#fff" stroke="#8b9298" strokeWidth="0.600" />
      <path d="M16 2V30M13 5L16 2L19 5M13 27L16 30L19 27" stroke="#2f93e8" strokeWidth="1.600" fill="none" />
    </>
  ),
  openWall: (
    <>
      <path d="M11 2H20.500V10.500H11ZM11 22H20.500V30.500H11Z" fill="#a9aeb3" stroke={INK} strokeWidth="1.400" />
      <path d="M11 10.500H20.500V22H11Z" fill="#fff" stroke="#8b9298" strokeWidth="0.600" />
      <path d="M4 16.500H28M7 13.500L4 16.500L7 19.500M25 13.500L28 16.500L25 19.500" stroke="#2f93e8" strokeWidth="1.600" fill="none" />
    </>
  ),
  vertical: (
    <>
      <path d="M2 5L11 9V19L2 15ZM21 14L30 19V30L21 24Z" fill="#a9aeb3" stroke={INK} />
      <path d="M11 9L21 14V24L11 19Z" fill="#fff" stroke="#8b9298" strokeWidth="0.600" />
      <path d="M16 2V30M13 5L16 2L19 5M13 27L16 30L19 27" stroke="#2f93e8" strokeWidth="1.600" fill="none" />
    </>
  ),
  dormer: (
    <>
      <path d="M2 30L25 2H30V7L9 30Z" fill="#fff" stroke="#8b9298" />
      <path d="M2 30L9 21V30ZM20 8L25 2H30V7L28 9Z" fill="#a9aeb3" stroke={INK} />
      <path d="M9 30V9H30" stroke="#d8262c" strokeWidth="1.500" />
    </>
  ),
  level: (
    <>
      <path d="M0 17H31" stroke={INK} strokeWidth="1.400" strokeDasharray="4 2" />
      <circle cx="21" cy="17" r="8" fill="#fff" stroke={INK} />
      <path d="M21 17V9A8 8 0 0 1 29 17ZM21 17V25A8 8 0 0 1 13 17Z" fill={INK} />
      <path d="M21 7V27M12 17H31" stroke={INK} />
      <path d="M4.500 10L6.500 9V14M4.500 14H8.500" stroke={INK} fill="none" />
    </>
  ),
  grid: (
    <>
      <path d="M15.500 7V31M26.500 7V31M7 15.500H31M7 26.500H31" stroke={INK} strokeWidth="1.400" />
      <g fill="#fff" stroke={INK} strokeWidth="1.300">
        <circle cx="15.500" cy="4.500" r="3" /><circle cx="26.500" cy="4.500" r="3" />
        <circle cx="4.500" cy="15.500" r="3" /><circle cx="4.500" cy="26.500" r="3" />
      </g>
    </>
  ),
  set: (
    <>
      <path d="M6 10L28 4V26L6 31Z" fill="#a7d2f3" stroke={BLUE} strokeWidth="1.400" />
      <path d="M12 8V30M17 7V29M23 5V27M6 17L28 11M6 24L28 18" stroke={BLUE} />
      <path d="M2.500 16L8 14H19V28L13 30H4L2.500 28Z" fill="#d5e9f8" fillOpacity="0.400" stroke={INK} />
    </>
  ),
  show: (
    <>
      <path d="M2 8L23 3V24L2 30Z" fill="#f6f6f6" stroke={INK} />
      <path d="M9 6V28M16 5V26M2 15L23 10M2 22L23 17" stroke={INK} />
      <circle cx="24" cy="19" r="5.500" fill="#ffd257" stroke="#c08a1e" />
      <path d="M22 25H26V30H22Z" fill="#ccc" stroke={INK} />
    </>
  ),
  refPlane: (
    <>
      <path d="M9 4H31L23 27H2Z" fill="#a7d2f3" stroke={BLUE} strokeWidth="1.400" />
      <path d="M6 4H31M10 1L1 30M1 27H16" stroke={BLUE} strokeWidth="1.200" />
      <Pencil />
    </>
  ),
};

const ToolIcon = ({ name }: { name: string }) => (
  <svg width="32" height="32" viewBox="0 0 32 32" fill="none">{tool[name]}</svg>
);

const PointerIcon = () => (
  <svg width="32" height="32" viewBox="0 0 32 32"><path d="M11 5V22L15 19L18 26L21 25L18 18H22Z" fill="#fff" stroke={INK} strokeWidth="1.300" /></svg>
);

const DARK = "#5a1010";

const reinforce: Record<string, React.ReactNode> = {
  update: <path d="M2 8V4H13M11 1L14 4L11 7M14 8V12H3M5 9L2 12L5 15" stroke={DARK} strokeWidth="2" />,
  updateLink: (
    <>
      <path d="M2 5V3H13M11 0L14 3L11 6M14 11V13H3M5 10L2 13L5 16" stroke={DARK} strokeWidth="2" />
      <path d="M4 6.500H12M4 10H12M8 6V10" stroke={DARK} strokeWidth="1.500" />
    </>
  ),
  delete: <path d="M2 2L14 14M14 2L2 14" stroke="#6b1a10" strokeWidth="5" />,
  gear: (
    <>
      <circle cx="8" cy="8" r="6.500" fill="#a03418" stroke={DARK} strokeWidth="3" strokeDasharray="3 2" />
      <circle cx="8" cy="8" r="6" fill="#9b3018" stroke={DARK} />
      <circle cx="8" cy="8" r="2" fill="#f3dcd8" stroke={DARK} />
    </>
  ),
  link: (
    <>
      <rect x="3" y="1.500" width="5" height="8" rx="1" stroke={DARK} strokeWidth="3" />
      <rect x="8" y="6.500" width="5" height="8" rx="1" stroke={DARK} strokeWidth="3" />
      <rect x="3" y="1.500" width="5" height="8" rx="1" stroke="#c0302c" />
      <rect x="8" y="6.500" width="5" height="8" rx="1" stroke="#c0302c" />
    </>
  ),
  settings: (
    <>
      <rect x="1" y="1" width="14" height="14" fill="#f7e8ee" stroke={DARK} strokeWidth="1.500" />
      <path d="M1 2.500H15" stroke={DARK} strokeWidth="2" />
      <path d="M3 6H8M3 9H5M6 9H8M3 12H8" stroke="#8b1840" strokeWidth="1.300" />
      <path d="M10.500 5.500H12.500V7.500H10.500ZM10.500 10.500H12.500V12.500H10.500Z" stroke="#8b1840" />
    </>
  ),
};

const ReinforceIcon = ({ name }: { name: string }) => (
  <svg width="16" height="16" viewBox="0 0 16 16" fill="none">{reinforce[name]}</svg>
);

const CreateRebarIcon = () => (
  <svg width="32" height="32" viewBox="0 0 32 32" fill="none" stroke="#4a1414">
    <path d="M7.500 1.500H24.500V18.500H31.500V31H0.500V18.500H7.500Z" strokeWidth="1.400" />
    <rect x="10" y="4" width="12" height="24.500" />
    <rect x="3" y="21" width="26" height="7.500" />
    <path d="M11 7L13 5M4 24L6 22" />
    <g fill="#1a1a1a" stroke="none"><circle cx="5" cy="26.500" r="1.500" /><circle cx="11" cy="26.500" r="1.500" /><circle cx="21" cy="26.500" r="1.500" /><circle cx="27" cy="26.500" r="1.500" /></g>
  </svg>
);

const ModifyRebarIcon = () => (
  <svg width="32" height="32" viewBox="0 0 32 32" fill="#4f1513">
    <path d="M4 21L21 5L27 11L10 28Z" />
    <path d="M23 3L26 0L32 6L29 9Z" />
    <path d="M1 31V23L9 31Z" />
  </svg>
);

/* ---------- data ---------- */

type ToolSpec = { w: number; icon: string; label: string; drop?: "below" | "side"; off?: boolean };

const panels: { title: string; pad?: number; padEnd?: number; min?: number; menu?: boolean; tools: ToolSpec[] }[] = [
  {
    title: "Build",
    tools: [
      { w: 48, icon: "wall", label: "Wall", drop: "below" },
      { w: 36, icon: "door", label: "Door" },
      { w: 54, icon: "window", label: "Window" },
      { w: 82, icon: "component", label: "Component", drop: "below" },
      { w: 70, icon: "column", label: "Column", drop: "below" },
      { w: 42, icon: "roof", label: "Roof", drop: "below" },
      { w: 48, icon: "ceiling", label: "Ceiling" },
      { w: 44, icon: "floor", label: "Floor", drop: "below" },
      { w: 54, icon: "curtainSystem", label: "Curtain\nSystem" },
      { w: 34, icon: "curtainGrid", label: "Curtain\nGrid" },
      { w: 56, icon: "mullion", label: "Mullion" },
    ],
  },
  {
    title: "Circulation", pad: 8, padEnd: 6,
    tools: [
      { w: 46, icon: "railing", label: "Railing", drop: "below" },
      { w: 48, icon: "ramp", label: "Ramp" },
      { w: 30, icon: "stair", label: "Stair" },
    ],
  },
  {
    title: "Model", pad: 2, padEnd: 1,
    tools: [
      { w: 42, icon: "modelText", label: "Model\nText" },
      { w: 38, icon: "modelLine", label: "Model\nLine" },
      { w: 54, icon: "modelGroup", label: "Model\nGroup", drop: "side" },
    ],
  },
  {
    title: "Room & Area", padEnd: 5, menu: true,
    tools: [
      { w: 44, icon: "room", label: "Room", off: true },
      { w: 50, icon: "roomSep", label: "Room\nSeparator", off: true },
      { w: 60, icon: "tagRoom", label: "Tag\nRoom", drop: "side" },
      { w: 40, icon: "area", label: "Area", drop: "below" },
      { w: 60, icon: "areaBoundary", label: "Area\nBoundary", off: true },
      { w: 40, icon: "tagArea", label: "Tag\nArea", drop: "side" },
    ],
  },
  {
    title: "Opening",
    tools: [
      { w: 42, icon: "byFace", label: "By\nFace" },
      { w: 34, icon: "shaft", label: "Shaft" },
      { w: 44, icon: "openWall", label: "Wall" },
      { w: 38, icon: "vertical", label: "Vertical" },
      { w: 51, icon: "dormer", label: "Dormer" },
    ],
  },
  {
    title: "Datum", padEnd: 6,
    tools: [
      { w: 44, icon: "level", label: "Level" },
      { w: 32, icon: "grid", label: "Grid" },
    ],
  },
  {
    title: "Work Plane", min: 160,
    tools: [
      { w: 42, icon: "set", label: "Set" },
      { w: 36, icon: "show", label: "Show" },
      { w: 40, icon: "refPlane", label: "Ref\nPlane" },
    ],
  },
];

const tabs = ["Architecture", "Structure", "Steel", "Systems", "Insert", "Annotate", "Analyze", "Massing & Site", "Collaborate", "View", "Manage", "Add-Ins", "T4R: Reinforcement", "T4R: Create/Modify", "ProdLib", "TOOLS 4 BIM", "T4R: Wood Framing", "T4R: Document", "Modify", "Precast"];

type Prop = { name: string; value: string; kind?: "input" | "button" | "check"; dim?: boolean };

const props: Prop[] = [
  { name: "View Scale", value: "1 : 50", kind: "input" },
  { name: "Scale Value    1:", value: "50", dim: true },
  { name: "Display Model", value: "Normal" },
  { name: "Detail Level", value: "Medium" },
  { name: "Parts Visibility", value: "Show Original" },
  { name: "Visibility/Graphics Ov...", value: "Edit...", kind: "button" },
  { name: "Graphic Display Options", value: "Edit...", kind: "button" },
  { name: "Hide at scales coarser ...", value: " 1 : 50" },
  { name: "Discipline", value: "Structural" },
  { name: "Show Hidden Lines", value: "By Discipline" },
  { name: "Color Scheme Location", value: "Background" },
  { name: "Color Scheme", value: "<none>", kind: "button" },
  { name: "Default Analysis Displ...", value: "None" },
  { name: "Sun Path", value: "", kind: "check" },
];

type Node = { depth: 0 | 1 | 2; text: string; on?: boolean; last?: boolean };

const nodes: Node[] = [
  { depth: 0, text: "Views (all)" },
  { depth: 1, text: "Structural Plans" },
  { depth: 2, text: "Level 1", on: true },
  { depth: 2, text: "Level 2" },
  { depth: 2, text: "Level 3" },
  { depth: 2, text: "Level 4" },
  { depth: 2, text: "Site", last: true },
  { depth: 1, text: "3D Views" },
  { depth: 2, text: "Analytical Model" },
  { depth: 2, text: "{3D}", last: true },
  { depth: 1, text: "Elevations (Building Elevation)" },
  { depth: 2, text: "East" },
  { depth: 2, text: "" },
];

/* ---------- parts ---------- */

const Tool = ({ spec }: { spec: ToolSpec }) => (
  <ToolButton $w={spec.w} disabled={spec.off}>
    <ToolIcon name={spec.icon} />
    <ToolLabel>
      {spec.drop === "side" && <LabelPad />}
      {spec.label}
      {spec.drop === "side" && <LabelPad><Caret /></LabelPad>}
    </ToolLabel>
    {spec.drop === "below" && <ToolDrop><Caret /></ToolDrop>}
  </ToolButton>
);

const Quick = ({ name, label, active, spaced }: { name: string; label: string; active?: boolean; spaced?: boolean }) => (
  <QuickButton aria-label={label} $active={active} $spaced={spaced}><QuickIcon name={name} /></QuickButton>
);

const Drop = ({ label }: { label: string }) => <QuickDrop aria-label={label}><Caret /></QuickDrop>;

const DoubleChevron = () => (
  <svg width="7" height="10" viewBox="0 0 7 10" fill="none" stroke="#000" strokeWidth="1.400">
    <path d="M0.500 5L3.500 1.500L6.500 5M0.500 9L3.500 5.500L6.500 9" />
  </svg>
);

const PropertyRow = ({ prop }: { prop: Prop }) => (
  <tr>
    <PropName scope="row" $dim={prop.dim}>{prop.name}</PropName>
    <PropValue $dim={prop.dim} $flush={prop.kind === "input" || prop.kind === "button"}>
      {prop.kind === "input" && <ScaleInput aria-label={prop.name} defaultValue={prop.value} />}
      {prop.kind === "button" && <CellButton>{prop.value}</CellButton>}
      {prop.kind === "check" && <Tick type="checkbox" aria-label={prop.name} />}
      {!prop.kind && prop.value}
    </PropValue>
    <PropValue />
  </tr>
);

const ViewsIcon = () => (
  <svg width="14" height="14" viewBox="0 0 14 14" fill="none" stroke={INK}>
    <path d="M3 0.500H0.500V3M11 0.500H13.500V3M3 13.500H0.500V11M11 13.500H13.500V11" />
    <path d="M3.500 5L5.500 3.500H10.500V9L8.500 10.500H3.500Z" fill="#fff" /><path d="M8.500 10.500V5" stroke="#99a" />
  </svg>
);

const TreeItem = ({ node }: { node: Node }) => (
  <TreeRow>
    {node.depth === 0 && <><Fold aria-label={`Collapse ${node.text}`} /><Twig $w={8} /><ViewsIcon /><TreeText $root>{node.text}</TreeText></>}
    {node.depth === 1 && <><Guide $kind="pass" /><Fold aria-label={`Collapse ${node.text}`} /><Twig $w={10} /><TreeText>{node.text}</TreeText></>}
    {node.depth === 2 && (
      <>
        <Guide $kind="pass" /><Guide $kind="pass" /><Guide $kind={node.last ? "end" : "leaf"} />
        {node.text && <><Twig $w={14} /><TreeText $on={node.on}>{node.text}</TreeText></>}
      </>
    )}
  </TreeRow>
);

const columnWidths = [30, 115, 115, 93, 55, 55, 55, 55, 55, 55, 60, 60, 60];

const RebarGrid = ({ first, centered }: { first?: boolean; centered: boolean }) => (
  <GridFrame $first={first}>
    <RebarTable>
      <colgroup>{columnWidths.map((w, i) => <col key={i} width={w} />)}</colgroup>
      <thead>
        <tr>
          <HeadCell $corner />
          <HeadCell>Rebar bar type</HeadCell>
          <HeadCell>Bar shape</HeadCell>
          <HeadCell $left>Layout type</HeadCell>
          {["L1", "L2", "L3", "Step L1", "Step L2", "Step L3"].map((h) => <HeadCell key={h}>{h}</HeadCell>)}
          <HeadCell><span>{"Start\nOffset"}</span></HeadCell>
          <HeadCell><span>{"End\nOffset"}</span></HeadCell>
          <HeadCell>Centered</HeadCell>
        </tr>
      </thead>
      <tbody>
        <tr>
          <RowHead scope="row">1</RowHead>
          <DataCell $high>H8</DataCell>
          <DataCell $high>OShape</DataCell>
          <DataCell>
            <LayoutSelect $w={90} $h={21}>
              <select aria-label="Layout type" defaultValue="OneStep"><option>OneStep</option></select>
              <Chevron size={6} />
            </LayoutSelect>
          </DataCell>
          <DataCell>0</DataCell>
          <DataCell>1</DataCell>
          <DataCell $dim>0</DataCell>
          <DataCell $dim>200 mm</DataCell>
          <DataCell>200 mm</DataCell>
          <DataCell $dim>200 mm</DataCell>
          <DataCell>1500 mm</DataCell>
          <DataCell>2100 mm</DataCell>
          <DataCell>
            <TickBox>
              <Tick type="checkbox" aria-label="Centered" defaultChecked={centered} $edge="#777777" />
              {centered && <svg width="9" height="9" viewBox="0 0 9 9"><path d="M1 4L3.500 7.500L8 1" fill="none" stroke="#222" strokeWidth="2" /></svg>}
            </TickBox>
          </DataCell>
        </tr>
      </tbody>
    </RebarTable>
  </GridFrame>
);

const speckle = (start: number) => {
  let seed = start;
  const next = () => (seed = (seed * 16807) % 2147483647) / 2147483647;
  return Array.from({ length: 150 }, (_, i) => {
    const x = Math.round(370 + ((i + next()) * 674) / 150);
    const y = Math.round(3 + next() * 39);
    return { x, y, long: next() > 0.4, rise: next() > 0.5 };
  });
};

const Beam = ({ seed, top, barTop, barBottom, barStart, barEnd, stirrups }: { seed: number; top: number; barTop: number[]; barBottom: number[]; barStart: number; barEnd: number; stirrups: number[] }) => (
  <g>
    <rect x="366.500" y={top + 0.5} width="684" height="45" fill="#fff" stroke="#000" />
    <path
      d={speckle(seed).map((s) => `M${s.x} ${top + s.y}h1v1h-1z${s.long ? `m1 ${s.rise ? -1 : 0}h1v1h-1z` : ""}`).join("")}
      fill="#000"
    />
    {[barTop, barBottom].map(([a, b]) => (
      <rect key={a} x={barStart + 0.5} y={a + 0.5} width={barEnd - barStart} height={b - a} fill="#fff" stroke="#f00" />
    ))}
    <path d={stirrups.map((x) => `M${x} ${barTop[0] + 1}V${barBottom[1]}`).join("")} stroke="#00ffff" strokeWidth="2" />
  </g>
);

const Dimension = ({ y, stops, labels }: { y: number; stops: number[]; labels: [number, string][] }) => (
  <g>
    <path d={`M${stops[0]} ${y}.5H${stops[stops.length - 1]}`} stroke="#000" />
    <path d={stops.map((x) => `M${x - 5} ${y + 5}L${x + 5} ${y - 5}`).join("")} stroke="#000" />
    {labels.map(([x, t]) => <text key={t} x={x} y={y - 15}>{t}</text>)}
  </g>
);

const Drawing = () => (
  <svg width="724" height="372" viewBox="344 289 724 372" fontFamily="Liberation Sans, Arial, sans-serif" fontSize="19" textAnchor="middle" fill="none" shapeRendering="crispEdges">
    <Beam seed={11} top={391} barTop={[394, 397]} barBottom={[431, 433]} barStart={372} barEnd={1044}
      stirrups={[602, 613, 636, 658, 680, 703, 725, 748, 770, 793, 815, 837, 860, 882]} />
    <Beam seed={97} top={514} barTop={[518, 520]} barBottom={[554, 556]} barStart={369} barEnd={1047}
      stirrups={[608, 630, 653, 675, 697, 720, 742, 765, 787, 809, 832, 854, 877]} />
    <g fill="#000">
      <Dimension y={346} stops={[366, 602, 882, 1050]} labels={[[485, "2100"], [742, "2500"], [966, "1500"]]} />
      <Dimension y={490} stops={[366, 607, 876, 1050]} labels={[[487, "2150"], [742, "2400"], [963, "1550"]]} />
      <text x="605" y="608">50</text>
      <text x="879" y="608">50</text>
    </g>
    <path d="M366.500 333V383M1050.500 333V383M602.500 333V355M882.500 333V355M366.500 477V506M1050.500 477V506M607.500 477V511M876.500 477V511M607.500 564V591M876.500 564V591M602.500 585V591M882.500 585V591M602.500 613V636M607.500 613V636M876.500 613V636M882.500 613V636M602 622.500H608M876 622.500H883" stroke="#000" />
    <path d="M597 628L607 618M603 628L613 618M872 628L882 618M877 628L887 618" stroke="#000" />
    <path d="M602.500 316V325M882.500 316V325" stroke="#008000" />
    <path d="M602.500 336V576M882.500 336V576" stroke="#008000" strokeDasharray="12 11" />
  </svg>
);

const Callouts = () => (
  <Markup width="100%" height="100%" fill="none">
    <MarkupShadow>
      <g fill="#ff3333">
        <path d="M393 101H397L397 127H402L395 143L389 127H393Z" />
        <path d="M461 385L468 403H464L466 476H462L459 403H455Z" />
        <path d="M811 35L814 32L831 46L836 42L844 60L825 55L828 50Z" />
        <path d="M829 479L832 476L844 489L847 483L854 502L836 496L840 492Z" />
      </g>
      <path d="M850 60H881V85H850ZM855 503H894V535H855Z" stroke="#ff0000" strokeWidth="2" />
    </MarkupShadow>
    <path d="M1303.500 407V425L1308 420" fill="#fff" stroke="#222" />
  </Markup>
);

const ReinforceBox = () => (
  <ReinforcePanel>
    <ReinforceTools>
      <BigTool $w={80}><CreateRebarIcon />Create Rebar</BigTool>
      <BigTool $w={88}><ModifyRebarIcon />Modify Rebar</BigTool>
      <SmallTools $w={154}>
        <SmallTool><ReinforceIcon name="update" />Update Rebar</SmallTool>
        <SmallTool><ReinforceIcon name="updateLink" />Update By Beam Link</SmallTool>
        <SmallTool><ReinforceIcon name="delete" />Delete Rebar</SmallTool>
      </SmallTools>
      <SmallTools>
        <SmallTool><ReinforceIcon name="gear" />Rebar Configs</SmallTool>
        <SmallTool><ReinforceIcon name="link" />Beam Link</SmallTool>
        <SmallTool><ReinforceIcon name="settings" />Settings<Caret /></SmallTool>
      </SmallTools>
    </ReinforceTools>
    <PanelTitle>Beam Reinforcement</PanelTitle>
  </ReinforcePanel>
);

const SheetIcon = () => (
  <svg width="16" height="16" viewBox="0 0 16 16" fill="none" stroke="#777">
    <rect x="0.500" y="0.500" width="15" height="15" fill="#ddd" /><path d="M0 3H16" strokeWidth="2" />
    <path d="M3 7H6M3 10H6M8 7H13M8 10H13M8 13H13M3 13H6" />
  </svg>
);

const PlanIcon = () => (
  <svg width="16" height="16" viewBox="0 0 16 16" fill="none" stroke="#777">
    <path d="M0.500 0.500H11.500V4.500H15.500V15.500H3.500V12.500H0.500Z" fill="#ddd" />
    <path d="M3 2V10M5.500 2V10M8 2V6M6.500 8V14M9 6V14M11.500 6V14M13.500 6V14M2 4H9" />
  </svg>
);

export default function App() {
  return (
    <Shell>
      <GlobalStyle />
      <TitleBar>
        <QuickBar>
          <Quick name="logo" label="Revit" />
          <Quick name="list" label="Properties" />
          <Quick name="open" label="Open" spaced />
          <Quick name="save" label="Save" />
          <Quick name="sync" label="Synchronize" /><Drop label="Synchronize options" />
          <Quick name="undo" label="Undo" /><Drop label="Undo list" />
          <Quick name="redo" label="Redo" /><Drop label="Redo list" />
          <Quick name="print" label="Print" />
          <QuickSplit />
          <Quick name="measure" label="Measure" /><Drop label="Measure options" />
          <Quick name="dim" label="Aligned Dimension" />
          <Quick name="tag" label="Tag by Category" />
          <Quick name="letter" label="Text" />
          <QuickSplit />
          <Quick name="house" label="Default 3D View" /><Drop label="3D view options" />
          <Quick name="section" label="Section" />
          <Quick name="thin" label="Thin Lines" active />
          <QuickSplit />
          <Quick name="closeViews" label="Close Inactive Views" />
          <Quick name="switchViews" label="Switch Windows" /><Drop label="Window list" />
          <QuickDrop aria-label="Customize Quick Access Toolbar">
            <svg width="8" height="8" viewBox="0 0 8 8"><path d="M0 0H8V1H0ZM0 3H8L4 7Z" fill={INK} /></svg>
          </QuickDrop>
        </QuickBar>
        <WindowTitle>Autodesk Revit 2020.2 - M_2020_BR Development project.rvt - Section: Section 19</WindowTitle>
        <SearchBar>
          <svg width="5" height="8" viewBox="0 0 5 8"><path d="M5 0V8L0 4Z" fill={INK} /></svg>
          <QuickIcon name="binoculars" />
          <svg width="9" height="18" viewBox="0 0 9 18"><path d="M1 16L4 11C2 6 6 2 9 2V16Z" fill="#6aa8ee" stroke="#1b2f66" /></svg>
        </SearchBar>
      </TitleBar>
      <TabStrip>
        <FileTab>File</FileTab>
        {tabs.map((t, i) => <RibbonTab key={t} $active={i === 0}>{t}</RibbonTab>)}
        <RibbonToggle aria-label="Minimize ribbon">
          <svg width="16" height="10" viewBox="0 0 16 10"><rect x="0.500" y="0.500" width="15" height="8" rx="2" fill="#fff" stroke={INK} /><path d="M5 6H10L7.500 3Z" fill={INK} /></svg>
        </RibbonToggle>
      </TabStrip>
      <Ribbon>
        <Panel>
          <PanelTools><ModifyButton><PointerIcon /><ToolLabel>Modify</ToolLabel></ModifyButton></PanelTools>
          <PanelTitle>Select<Caret size={7} /></PanelTitle>
        </Panel>
        {panels.map((p) => (
          <Panel key={p.title} $pad={p.pad} $padEnd={p.padEnd} $min={p.min}>
            <PanelTools>{p.tools.map((t) => <Tool key={t.icon} spec={t} />)}</PanelTools>
            <PanelTitle>{p.title}{p.menu && <Caret size={7} />}</PanelTitle>
          </Panel>
        ))}
      </Ribbon>
      <OptionsBar />
      <Workspace>
        <SideBar>
          <PaletteHead>
            <PaletteTitle>Properties</PaletteTitle>
            <ButtonBase aria-label="Close Properties"><Cross /></ButtonBase>
          </PaletteHead>
          <TypeBox>
            <TypeThumb>
              <svg width="28" height="34" viewBox="0 0 28 34"><path d="M11 1L27 15L11 29V33" fill={INK} stroke={INK} strokeWidth="1.500" /><circle cx="10" cy="16" r="8.500" fill="#f0f0f0" stroke={INK} /></svg>
            </TypeThumb>
            <TypeNames>Section<br />Building Section</TypeNames>
            <Caret size={7} />
          </TypeBox>
          <InstanceRow>
            <SelectWrap $w={217} $h={23}>
              <select aria-label="Instance" defaultValue="Section: Section 19"><option>Section: Section 19</option></select>
              <Chevron size={9} />
            </SelectWrap>
            <EditType>
              <svg width="16" height="16" viewBox="0 0 16 16" fill="#f6f6f6" stroke={INK}>
                <path d="M0.500 2L2 0.500H7V6H0.500ZM8.500 2L10 0.500H15V6H8.500ZM0.500 9L2 7.500H7V14H0.500Z" />
                <rect x="8.500" y="6.500" width="6" height="9" fill="#fff" /><path d="M10 9H13M10 11H13M10 13H13" stroke={BLUE} />
              </svg>
              Edit Type
            </EditType>
          </InstanceRow>
          <PropScroll>
            <PropTable>
              <colgroup><col width="136" /><col width="134" /><col width="13" /></colgroup>
              <tbody>
                <tr><GroupCell colSpan={3}><div>Graphics<DoubleChevron /></div></GroupCell></tr>
                {props.map((p) => <PropertyRow key={p.name} prop={p} />)}
                <tr><GroupCell colSpan={3}><div>Extents<DoubleChevron /></div></GroupCell></tr>
              </tbody>
            </PropTable>
            <ScrollBar>
              <ScrollArrow aria-label="Scroll up"><Chevron up /></ScrollArrow>
              <ScrollThumb $h={112} />
              <ScrollArrow aria-label="Scroll down"><Chevron /></ScrollArrow>
            </ScrollBar>
          </PropScroll>
          <PaletteFoot>
            <a href="#properties-help">Properties help</a>
            <ApplyButton disabled>Apply</ApplyButton>
          </PaletteFoot>
          <BrowserPalette>
            <PaletteHead>
              <PaletteTitle>Project Browser - M_2020_BR Development project...</PaletteTitle>
              <ButtonBase aria-label="Close Project Browser"><Cross /></ButtonBase>
            </PaletteHead>
            <BrowserBody>
              <Tree>{nodes.map((n) => <TreeItem key={n.text} node={n} />)}</Tree>
              <ScrollBar>
                <ScrollArrow aria-label="Scroll up"><Chevron up /></ScrollArrow>
                <ScrollThumb $h={171} />
              </ScrollBar>
            </BrowserBody>
          </BrowserPalette>
        </SideBar>
        <DocArea>
          <DocTabs>
            <DocTab><SheetIcon /><DocName>Beam support</DocName></DocTab>
            <DocTab><PlanIcon /><DocName>Level 1</DocName></DocTab>
            <DocTab $active>
              <QuickIcon name="section" size={16} /><DocName>Section 19</DocName>
              <ButtonBase aria-label="Close Section 19"><Cross /></ButtonBase>
            </DocTab>
          </DocTabs>
          <Canvas>
            <RebarGrid first centered={false} />
            <DrawingRow><Drawing /><ReinforceBox /></DrawingRow>
            <RebarGrid centered />
            <Callouts />
          </Canvas>
        </DocArea>
      </Workspace>
    </Shell>
  );
}
